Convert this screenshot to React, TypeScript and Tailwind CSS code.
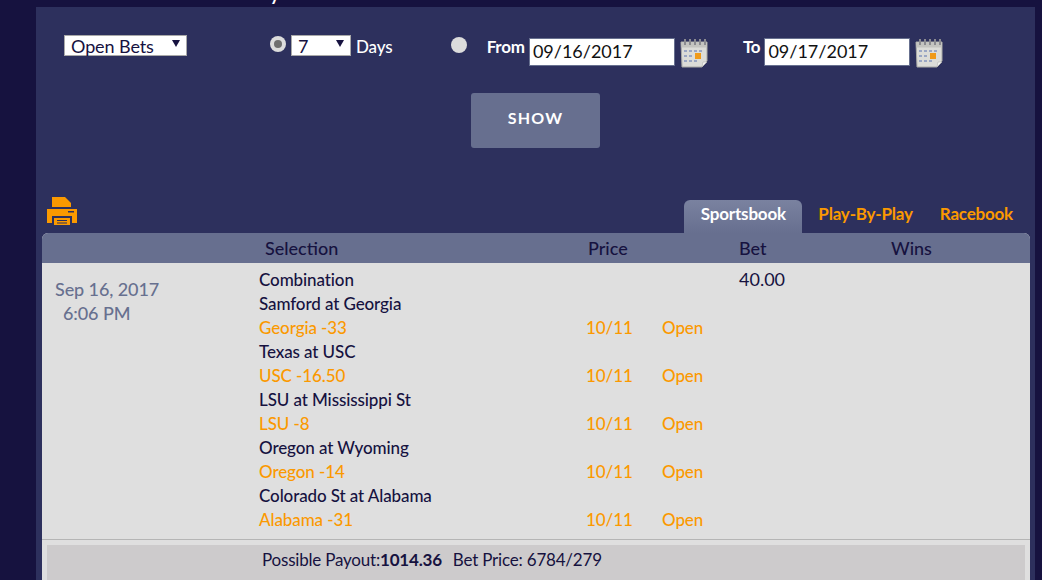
const legs = [
  { game: 'Samford at Georgia', pick: 'Georgia -33' },
  { game: 'Texas at USC', pick: 'USC -16.50' },
  { game: 'LSU at Mississippi St', pick: 'LSU -8' },
  { game: 'Oregon at Wyoming', pick: 'Oregon -14' },
  { game: 'Colorado St at Alabama', pick: 'Alabama -31' },
];

function Caret() {
  return <span className="absolute right-[6px] top-[4px] h-0 w-0 border-x-[4px] border-t-[7px] border-x-transparent border-t-[#16123f]" />;
}

function CalendarIcon() {
  return (
    <svg width="29" height="30" viewBox="0 0 29 30" className="shrink-0">
      <path d="M1 4 H27 V23 L22 29 H2 Z" fill="#dcdcd8" stroke="#a9a9a6" strokeWidth="1" />
      <rect x="1.5" y="4.5" width="25" height="5" fill="#c4c4c0" />
      <g fill="#8a8a90">
        <rect x="4" y="1" width="2" height="6" />
        <rect x="9" y="1" width="2" height="6" />
        <rect x="14" y="1" width="2" height="6" />
        <rect x="19" y="1" width="2" height="6" />
        <rect x="24" y="1" width="2" height="6" />
      </g>
      <g fill="#9aa6c4">
        <rect x="4" y="12" width="3" height="2" />
        <rect x="9" y="12" width="3" height="2" />
        <rect x="14" y="12" width="3" height="2" />
        <rect x="19" y="12" width="3" height="2" />
        <rect x="4" y="17" width="3" height="2" />
        <rect x="9" y="17" width="3" height="2" />
        <rect x="4" y="22" width="3" height="2" />
        <rect x="9" y="22" width="3" height="2" />
        <rect x="14" y="22" width="3" height="2" />
      </g>
      <rect x="15" y="15" width="6" height="6" fill="#f09a1a" />
      <path d="M22 29 L23 24 H27 Z" fill="#f4f4f2" stroke="#a9a9a6" strokeWidth="0.5" />
    </svg>
  );
}

function PrinterIcon() {
  return (
    <svg width="32" height="30" viewBox="0 0 32 30" className="shrink-0">
      <path d="M6 1 H19 L25 7 V11 H6 Z" fill="#fb9900" />
      <path d="M1 13 H31 V27 H26 V20 H6 V27 H1 Z" fill="#fb9900" />
      <rect x="8" y="22" width="16" height="7" fill="#fb9900" />
      <rect x="11" y="24" width="10" height="1" fill="#2d305d" />
      <rect x="11" y="26.5" width="10" height="1" fill="#2d305d" />
      <rect x="22" y="15" width="6" height="1.5" fill="#2d305d" />
    </svg>
  );
}

function DateField({ value }: { value: string }) {
  return (
    <div className="flex h-[28px] w-[146px] items-center border border-[#67708f] bg-white pb-[1px] pl-[3px] text-[18px] text-[#111]">
      {value}
    </div>
  );
}

export default function App() {
  return (
    <div className="h-[580px] w-[1042px] overflow-hidden bg-[#16123f] font-['Lato','Open_Sans',sans-serif]">
      <div className="ml-[36px] flex h-[7px] justify-start overflow-hidden">
        <span className="-mt-[17px] ml-[234px] text-[18px] font-bold leading-[22px] text-white">y</span>
      </div>
      <div className="ml-[36px] h-[573px] w-[999px] bg-[#2d305d] pl-[6px]">
        {/* filtros */}
        <div className="flex h-[186px] flex-col">
          <div className="flex h-[86px] items-start pt-[28px]">
            <div className="relative ml-[22px] flex h-[21px] w-[123px] items-center border border-[#a9a9a9] bg-white pl-[6px] pt-[1px] text-[18px] leading-none tracking-[-0.1px] text-[#16123f]">
              Open Bets
              <Caret />
            </div>
            <span className="ml-[83px] mt-[1px] flex h-[16px] w-[16px] items-center justify-center rounded-full bg-[#dcdcdc]">
              <span className="h-[8px] w-[8px] rounded-full bg-[#6f6f6f]" />
            </span>
            <div className="relative ml-[5px] flex h-[21px] w-[60px] items-center border border-[#a9a9a9] bg-white pl-[6px] pt-[1px] text-[18px] leading-none text-[#16123f]">
              7
              <Caret />
            </div>
            <span className="ml-[5px] text-[17px] leading-[24px] font-medium tracking-[-0.1px] text-white">Days</span>
            <span className="ml-[58px] mt-[2px] h-[16px] w-[16px] rounded-full bg-[#dcdcdc]" />
            <span className="ml-[20px] text-[17px] leading-[23px] font-bold tracking-[-0.2px] text-white">From</span>
            <div className="ml-[4px] -mt-[6px] flex items-start gap-[5px] pt-[9px]">
              <DateField value="09/16/2017" />
              <CalendarIcon />
            </div>
            <span className="ml-[34px] text-[17px] leading-[23px] font-bold tracking-[-0.2px] text-white">To</span>
            <div className="ml-[4px] -mt-[6px] flex items-start gap-[5px] pt-[9px]">
              <DateField value="09/17/2017" />
              <CalendarIcon />
            </div>
          </div>
          <button className="ml-[429px] h-[55px] w-[129px] rounded-[3px] bg-[#676f8f] pb-[5px] text-[16px] font-bold tracking-[1.2px] text-white">
            SHOW
          </button>
        </div>

        {/* pestañas */}
        <div className="flex h-[40px] w-[988px] items-start pt-[2px]">
          <div className="ml-[4px] mt-[1px]">
            <PrinterIcon />
          </div>
          <div className="ml-auto flex items-end self-end text-[17px] font-bold tracking-[-0.2px]">
            <div className="flex h-[33px] w-[118px] items-center justify-center rounded-t-[6px] bg-gradient-to-b from-[#7a82a0] to-[#676f8f] pb-[5px] text-white">
              Sportsbook
            </div>
            <span className="ml-[16px] h-[33px] pt-[1px] text-[#fb9900]">Play-By-Play</span>
            <span className="ml-[27px] mr-[17px] h-[33px] pt-[1px] text-[#fb9900]">Racebook</span>
          </div>
        </div>

        {/* tabla */}
        <div className="w-[988px] rounded-t-[6px] bg-[#dfdfdf]">
          <div className="grid h-[30px] grid-cols-[217px_329px_151px_152px_1fr] items-center rounded-t-[6px] bg-[#676f8f] text-[18px] font-medium text-[#16123f]">
            <span />
            <span className="pl-[6px]">Selection</span>
            <span>Price</span>
            <span>Bet</span>
            <span>Wins</span>
          </div>
          <div className="flex h-[277px] border-b border-[#b5b5b5] pt-[5px] text-[17px] leading-[24px] tracking-[-0.1px]">
            <div className="w-[217px] pl-[13px] pt-[9px] text-[18px] font-medium tracking-[-0.1px] text-[#67708f]">
              <div>Sep 16, 2017</div>
              <div className="pl-[8px]">6:06 PM</div>
            </div>
            <div className="w-[480px]">
              <div className="font-medium text-[#16123f]">Combination</div>
              {legs.map((leg) => (
                <div key={leg.game}>
                  <div className="font-medium text-[#16123f]">{leg.game}</div>
                  <div className="grid grid-cols-[327px_76px_1fr] font-medium text-[#fb9900]">
                    <span>{leg.pick}</span>
                    <span>10/11</span>
                    <span>Open</span>
                  </div>
                </div>
              ))}
            </div>
            <div className="-mt-[1px] text-[18px] tracking-normal text-[#16123f]">40.00</div>
          </div>
          <div className="mx-[5px] mt-[5px] h-[40px] bg-[#cdcbcc] pl-[215px] pt-[3px] text-[17px] leading-[24px] tracking-[-0.2px] text-[#16123f]">
            Possible Payout:<span className="font-bold">1014.36</span>
            <span className="ml-[11px]">Bet Price: 6784/279</span>
          </div>
        </div>
      </div>
    </div>
  );
}
